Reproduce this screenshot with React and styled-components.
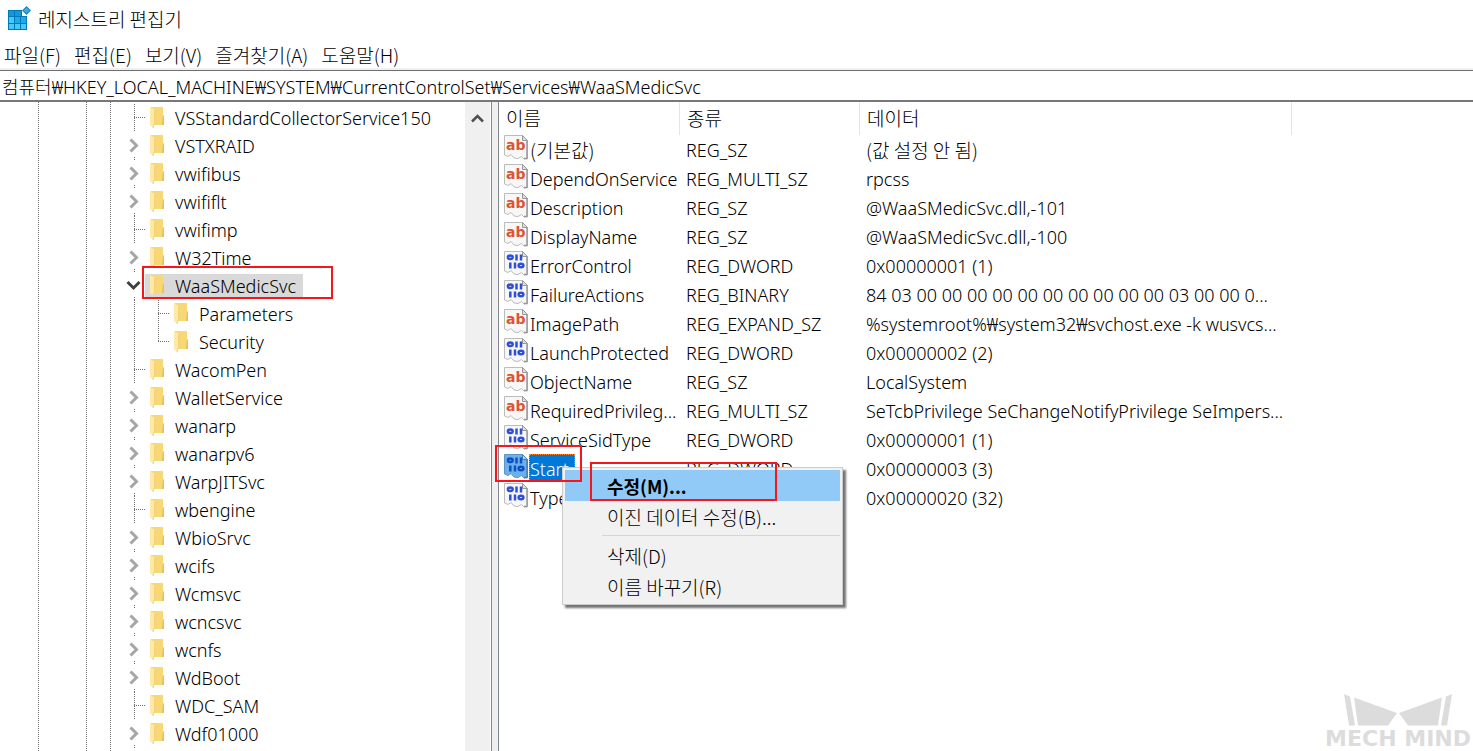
import React from "react";
import styled, { createGlobalStyle, css } from "styled-components";

const latin = `"Noto Sans", "Noto Sans CJK KR", sans-serif`;
const korean = `"Noto Sans CJK KR", "Noto Sans", sans-serif`;

const GlobalStyle = createGlobalStyle`
  * { box-sizing: border-box; }
  body { margin: 0; background: #fff; color: #000; overflow: hidden; }
  button, input { font: inherit; color: inherit; border: 0; background: none; padding: 0; margin: 0; }
`;

const Window = styled.div`
  position: relative;
  display: flex;
  flex-direction: column;
  height: 100vh;
  font-family: ${latin};
  font-size: 18px;
  font-weight: 300;
  line-height: 28px;
  white-space: nowrap;
`;

const TitleBar = styled.header`
  display: flex;
  align-items: center;
  gap: 7px;
  height: 38px;
  padding-left: 7px;
`;

const Title = styled.h1`
  margin: 0;
  font: 300 19px/28px ${korean};
`;

const MenuBar = styled.nav`
  display: flex;
  gap: 13px;
  height: 32px;
  padding: 4px 4px 0;
  border-bottom: 2px solid #f0f0f0;
  font: 300 19px/26px ${korean};
`;

const MenuButton = styled.button`
  display: block;
  height: 26px;
`;

const AddressBar = styled.div`
  display: flex;
  height: 32px;
  border-top: 1px solid #6e6e73;
  border-bottom: 2px solid #77777c;
`;

const AddressInput = styled.input`
  flex: 1;
  min-width: 0;
  padding: 2px 2px 0;
  outline: 0;
`;

const Panes = styled.main`
  flex: 1;
  min-height: 0;
  display: flex;
`;

const TreePane = styled.section`
  flex: none;
  display: flex;
  width: 492px;
  overflow: hidden;
  border-right: 1px solid #828790;
`;

const guide = "linear-gradient(#6f6f6f 1px, transparent 1px)";

const Tree = styled.ul`
  flex: 1;
  margin: 0;
  padding: 2px 0 0;
  list-style: none;
  background:
    ${guide} 38px 0 / 1px 2px repeat-y,
    ${guide} 86px 0 / 1px 2px repeat-y,
    ${guide} 110px 0 / 1px 2px repeat-y;
`;

const TreeRow = styled.li`
  position: relative;
  display: flex;
  height: 28px;
  padding-left: 122px;
`;

const TreeLabel = styled.span`
  display: flex;
  align-items: center;
  gap: 9px;
  height: 24px;
  margin: 2px 0 0 -5px;
  padding: 0 7px 0 5px;
  background: ${(p) => (p.$selected ? "#d9d9d9" : "transparent")};
`;

const ScrollBar = styled.div`
  width: 26px;
  padding: 9px 6px;
  background: #f0f0f0;
  border-right: 1px solid #fff;
`;

const ScrollButton = styled.button`
  display: block;
  height: 14px;
  line-height: 0;
`;

const Splitter = styled.div`
  flex: none;
  width: 6px;
  background: #f0f0f0;
`;

const ValuesPane = styled.section`
  flex: 1;
  min-width: 0;
  border-left: 1px solid #828790;
`;

const ValueTable = styled.table`
  width: 793px;
  table-layout: fixed;
  border-collapse: separate;
  border-spacing: 0;
`;

const HeadCell = styled.th`
  width: ${(p) => p.$width};
  height: 33px;
  padding: 2px 0 0 7px;
  border-right: 1px solid #e5e5e5;
  font: 300 19px/28px ${korean};
  text-align: left;
  vertical-align: top;
`;

const Cell = styled.td`
  position: relative;
  height: 29px;
  padding: 2px 0 0 6px;
  vertical-align: top;
  line-height: 27px;
  ${(p) => p.$korean && css`font: 300 19px/25px ${korean};`}
`;

const NameCell = styled(Cell)`
  padding: 0 0 0 5px;
`;

const ValueName = styled.span`
  display: flex;
  align-items: flex-start;
  gap: 1px;
  height: 29px;

  svg { flex: none; }
`;

const ValueText = styled.span`
  height: 28px;
  padding: 2px 0 0 1px;
  ${(p) => p.$selected && css`
    padding-right: 6px;
    background: #0078d7;
    color: #fff;
    outline: 1px dotted #ff8728;
    outline-offset: -1px;
  `}
`;

const Highlight = styled.span`
  position: absolute;
  z-index: 3;
  border: 2px solid #f8161c;
  pointer-events: none;
  inset: ${(p) => p.$inset};
  width: ${(p) => p.$width};
`;

const ContextMenu = styled.div`
  position: absolute;
  z-index: 2;
  top: 13px;
  left: 63px;
  width: 281px;
  padding: 2px;
  border: 1px solid #ccc;
  background: #f1f1f1;
  box-shadow: 3px 3px 2px rgba(0, 0, 0, 0.55);
  color: #000;
`;

const ContextItem = styled.button`
  position: relative;
  display: block;
  width: 100%;
  height: 31px;
  padding: 0 0 0 42px;
  text-align: left;
  font: ${(p) => (p.$active ? "700 18px/32px" : "300 19px/29px")} ${korean};
  background: ${(p) => (p.$active ? "#91c9f7" : "transparent")};
`;

const Separator = styled.hr`
  height: 1px;
  margin: 3px 0 4px 37px;
  border: 0;
  background: #d5d5d5;
`;

const Watermark = styled.aside`
  position: absolute;
  right: 2px;
  bottom: 1px;
  display: flex;
  flex-direction: column;
  align-items: center;
  gap: 2px;
  color: #dcdcdc;
  font: 700 22px/22px "DejaVu Sans", sans-serif;
`;

function AppIcon() {
  return (
    <svg width="24" height="26" viewBox="0 0 24 26" aria-hidden="true">
      <path d="M1 4h14v6h5v14H1z" fill="#0079b8" />
      <path d="M2 5h5v5H2z M8 5h6v5H8z" fill="#1299d8" />
      <path d="M2 11h5v6H2z M8 18h5v5H8z M2 18h5v5H2z M14 18h5v5h-5z" fill="#45c8fa" />
      <path d="M8 11h5v6H8z M14 11h5v6h-5z" fill="#1fa9e6" />
      <path d="M19.500 0L24 4.500L19.500 9L15 4.500z" fill="#1586bd" />
      <path d="M19.500 1.500L22.500 4.500L19.500 7L16.500 4.500z" fill="#45a9d6" />
    </svg>
  );
}

function FolderIcon() {
  return (
    <svg width="16" height="22" viewBox="0 0 16 22" aria-hidden="true">
      <path d="M1 0h12v8l1 1v9H4z" fill="#f8d775" />
      <path d="M13 8l1 1v9h-2z" fill="#e9bf58" />
      <path d="M0 0l5 3v13l-2 5-3-3z" fill="#ffe9a6" />
      <path d="M4.500 3v13l-1.500 5" fill="none" stroke="#f3d27b" />
    </svg>
  );
}

function Branch({ kind }) {
  const dots = { stroke: "#6f6f6f", strokeDasharray: "1 1", shapeRendering: "crispEdges" };
  return (
    <svg width="28" height="28" viewBox="0 0 28 28" fill="none" aria-hidden="true">
      {kind === "leaf" && <path d="M12.500 0V28 M12 13.500H24" {...dots} />}
      {kind === "last" && <path d="M12.500 0V14 M12 13.500H24" {...dots} />}
      {kind === "line" && <path d="M12.500 0V28" {...dots} />}
      {(kind === "closed" || kind === "open") && <path d="M12.500 25V28" {...dots} />}
      {kind === "closed" && <path d="M8.500 7.500L14.500 13.500L8.500 19.500" stroke="#a6a6a6" strokeWidth="3" />}
      {kind === "open" && <path d="M5.500 10L11.500 16L17.500 10" stroke="#404040" strokeWidth="3" />}
    </svg>
  );
}

const BranchCell = styled.span`
  display: flex;
  width: ${(p) => (p.$nested ? "24px" : "28px")};
  overflow: hidden;

  svg { flex: none; }
`;

function ValueIcon({ binary, selected }) {
  const ink = selected ? "#0b50c8" : "#2d50d8";
  return (
    <svg width="24" height="25" viewBox="0 0 24 25" aria-hidden="true">
      <path
        d="M.5 .5H18.500L23.500 5.500V23.500L20 24L17.500 21.500L14 23.500L10 23L7 19.500L4 21.500L.5 20z"
        fill={selected ? "#6db1ea" : "#f7f7f7"}
        stroke={selected ? "#5b95c8" : "#bcbcbc"}
      />
      <path d="M18.500 .5V5.500H23.500z" fill={selected ? "#b0d6f5" : "#dedede"} stroke={selected ? "#4c7faa" : "#999"} />
      <path d="M23 6V23.500L20 23.500" fill="none" stroke={selected ? "#4c7faa" : "#999"} strokeWidth="1.500" />
      {binary ? (
        <g fill="none" stroke={ink} strokeWidth="2.500">
          <ellipse cx="6.300" cy="6.300" rx="2.400" ry="1.800" />
          <path d="M12.500 3.500V9.500 M17 3.500V9.500 M6.300 11.500V17.500 M11 11.500V17.500" />
          <ellipse cx="17" cy="14.500" rx="2.400" ry="1.800" />
        </g>
      ) : (
        <text x="2" y="15" fill="#de5433" fontFamily="DejaVu Sans" fontWeight="700" fontSize="14">ab</text>
      )}
    </svg>
  );
}

const tree = [
  ["VSStandardCollectorService150", "leaf"],
  ["VSTXRAID", "closed"],
  ["vwifibus", "closed"],
  ["vwififlt", "closed"],
  ["vwifimp", "leaf"],
  ["W32Time", "closed"],
  ["WaaSMedicSvc", "open"],
  ["Parameters", "leaf", true],
  ["Security", "last", true],
  ["WacomPen", "leaf"],
  ["WalletService", "closed"],
  ["wanarp", "closed"],
  ["wanarpv6", "closed"],
  ["WarpJITSvc", "closed"],
  ["wbengine", "leaf"],
  ["WbioSrvc", "closed"],
  ["wcifs", "closed"],
  ["Wcmsvc", "closed"],
  ["wcncsvc", "closed"],
  ["wcnfs", "closed"],
  ["WdBoot", "closed"],
  ["WDC_SAM", "leaf"],
  ["Wdf01000", "closed"],
];

const values = [
  ["(기본값)", "REG_SZ", "(값 설정 안 됨)"],
  ["DependOnService", "REG_MULTI_SZ", "rpcss"],
  ["Description", "REG_SZ", "@WaaSMedicSvc.dll,-101"],
  ["DisplayName", "REG_SZ", "@WaaSMedicSvc.dll,-100"],
  ["ErrorControl", "REG_DWORD", "0x00000001 (1)"],
  ["FailureActions", "REG_BINARY", "84 03 00 00 00 00 00 00 00 00 00 00 03 00 00 0..."],
  ["ImagePath", "REG_EXPAND_SZ", "%systemroot%₩system32₩svchost.exe -k wusvcs..."],
  ["LaunchProtected", "REG_DWORD", "0x00000002 (2)"],
  ["ObjectName", "REG_SZ", "LocalSystem"],
  ["RequiredPrivileg...", "REG_MULTI_SZ", "SeTcbPrivilege SeChangeNotifyPrivilege SeImpers..."],
  ["ServiceSidType", "REG_DWORD", "0x00000001 (1)"],
  ["Start", "REG_DWORD", "0x00000003 (3)"],
  ["Type", "", "0x00000020 (32)"],
];

function StartMenu() {
  return (
    <ContextMenu role="menu">
      <ContextItem role="menuitem" $active>
        수정(M)...
        <Highlight $inset="-8px auto 0 25px" $width="187px" />
      </ContextItem>
      <ContextItem role="menuitem">이진 데이터 수정(B)...</ContextItem>
      <Separator />
      <ContextItem role="menuitem">삭제(D)</ContextItem>
      <ContextItem role="menuitem">이름 바꾸기(R)</ContextItem>
    </ContextMenu>
  );
}

export default function App() {
  return (
    <>
      <GlobalStyle />
      <Window>
        <TitleBar>
          <AppIcon />
          <Title>레지스트리 편집기</Title>
        </TitleBar>
        <MenuBar>
          {["파일(F)", "편집(E)", "보기(V)", "즐겨찾기(A)", "도움말(H)"].map((m) => (
            <MenuButton key={m}>{m}</MenuButton>
          ))}
        </MenuBar>
        <AddressBar>
          <AddressInput
            aria-label="주소"
            defaultValue="컴퓨터₩HKEY_LOCAL_MACHINE₩SYSTEM₩CurrentControlSet₩Services₩WaaSMedicSvc"
          />
        </AddressBar>
        <Panes>
          <TreePane>
            <Tree role="tree">
              {tree.map(([name, kind, nested]) => (
                <TreeRow key={name} role="treeitem">
                  {nested && <BranchCell $nested><Branch kind="line" /></BranchCell>}
                  <BranchCell><Branch kind={kind} /></BranchCell>
                  <TreeLabel $selected={kind === "open"}>
                    <FolderIcon />
                    {name}
                  </TreeLabel>
                  {kind === "open" && <Highlight $inset="-6px auto 1px 142px" $width="191px" />}
                </TreeRow>
              ))}
            </Tree>
            <ScrollBar>
              <ScrollButton aria-label="위로">
                <svg width="13" height="12" viewBox="0 0 13 12" fill="none" aria-hidden="true">
                  <path d="M1 9.500L6.500 4L12 9.500" stroke="#505050" strokeWidth="2.500" />
                </svg>
              </ScrollButton>
            </ScrollBar>
          </TreePane>
          <Splitter />
          <ValuesPane>
            <ValueTable>
              <thead>
                <tr>
                  <HeadCell $width="181px">이름</HeadCell>
                  <HeadCell $width="180px">종류</HeadCell>
                  <HeadCell $width="auto">데이터</HeadCell>
                </tr>
              </thead>
              <tbody>
                {values.map(([name, type, data], i) => {
                  const selected = name === "Start";
                  return (
                    <tr key={name}>
                      <NameCell $korean={i === 0}>
                        <ValueName>
                          <ValueIcon binary={!type.endsWith("SZ")} selected={selected} />
                          <ValueText $selected={selected}>{name}</ValueText>
                        </ValueName>
                        {selected && <Highlight $inset="-9px auto 1px -4px" $width="87px" />}
                        {selected && <StartMenu />}
                      </NameCell>
                      <Cell>{type}</Cell>
                      <Cell $korean={i === 0}>{data}</Cell>
                    </tr>
                  );
                })}
              </tbody>
            </ValueTable>
          </ValuesPane>
        </Panes>
        <Watermark>
          <svg width="108" height="32" viewBox="0 0 108 32" fill="currentColor" aria-hidden="true">
            <path d="M0 0L6 2.500L11 31.500H5z M10 3.500L53 19L44 31.500H14z M108 0L102 2.500L97 31.500H103z M98 3.500L55 19L64 31.500H94z" />
          </svg>
          <span>MECH MIND</span>
        </Watermark>
      </Window>
    </>
  );
}
